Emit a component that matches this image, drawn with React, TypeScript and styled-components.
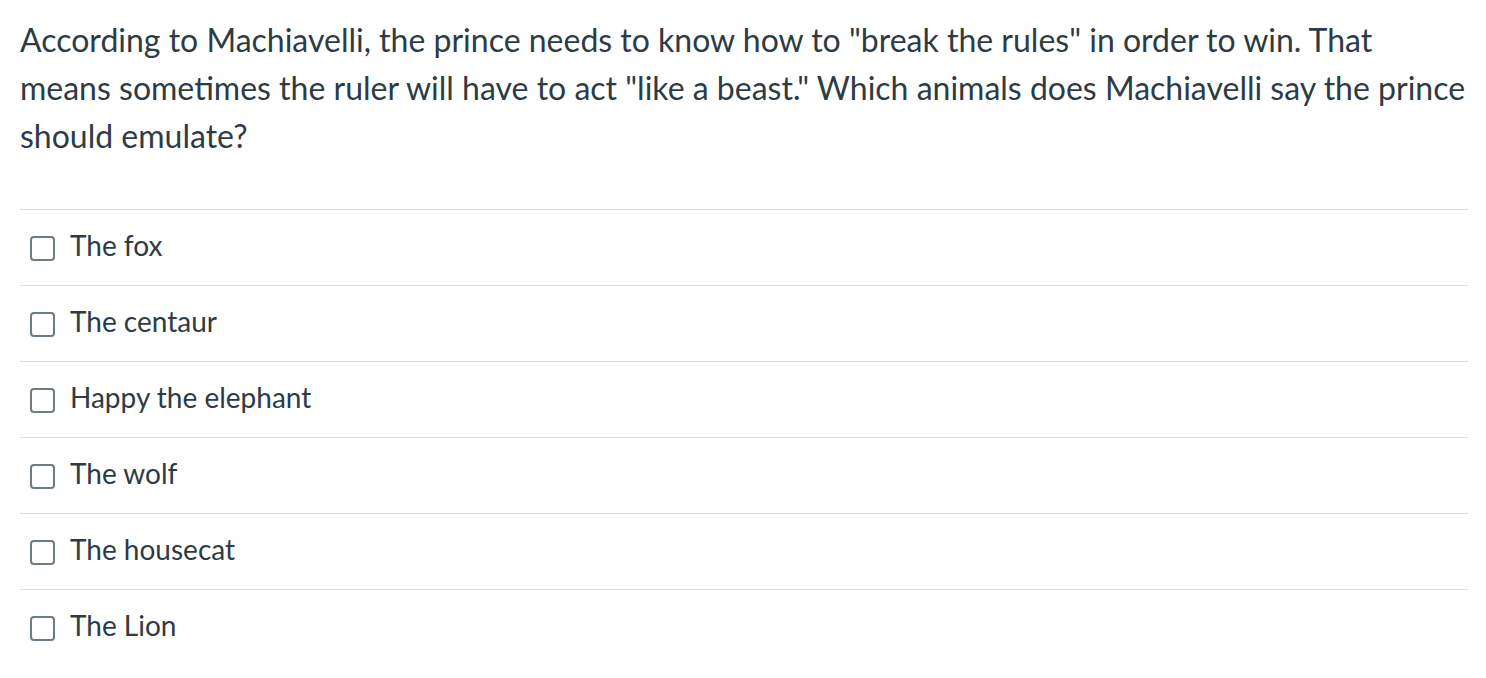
import React from "react";
import styled, { createGlobalStyle } from "styled-components";

const Global = createGlobalStyle`
  html, body { margin: 0; padding: 0; background: #fff; }
  body { font-family: Lato, "Noto Sans", sans-serif; color: #2d3b45; }
`;

const Page = styled.div`
  width: 1448px;
  padding: 16px 0 0 20px;
`;

const Question = styled.p`
  margin: 0 0 49px 0;
  font-size: 32px;
  line-height: 48px;
  color: #2d3b45;
`;

const List = styled.div`
  display: flex;
  flex-direction: column;
`;

const Row = styled.label`
  display: flex;
  align-items: center;
  gap: 15px;
  height: 75px;
  border-top: 1px solid #dadcde;
  padding-left: 10px;
  font-size: 28px;
  color: #2d3b45;
`;

const Box = styled.span`
  width: 21px;
  height: 21px;
  border: 2px solid #6f7b83;
  border-radius: 4px;
  flex: none;
  margin-top: 1px;
`;

const Text = styled.span`
  line-height: 34px;
  padding-bottom: 6px;
`;

const options = [
  "The fox",
  "The centaur",
  "Happy the elephant",
  "The wolf",
  "The housecat",
  "The Lion",
];

export default function App() {
  return (
    <Page>
      <Global />
      <Question>
        According to Machiavelli, the prince needs to know how to "break the rules" in order to win. That
        means sometimes the ruler will have to act "like a beast." Which animals does Machiavelli say the prince
        should emulate?
      </Question>
      <List>
        {options.map((o) => (
          <Row key={o}>
            <Box />
            <Text>{o}</Text>
          </Row>
        ))}
      </List>
    </Page>
  );
}
